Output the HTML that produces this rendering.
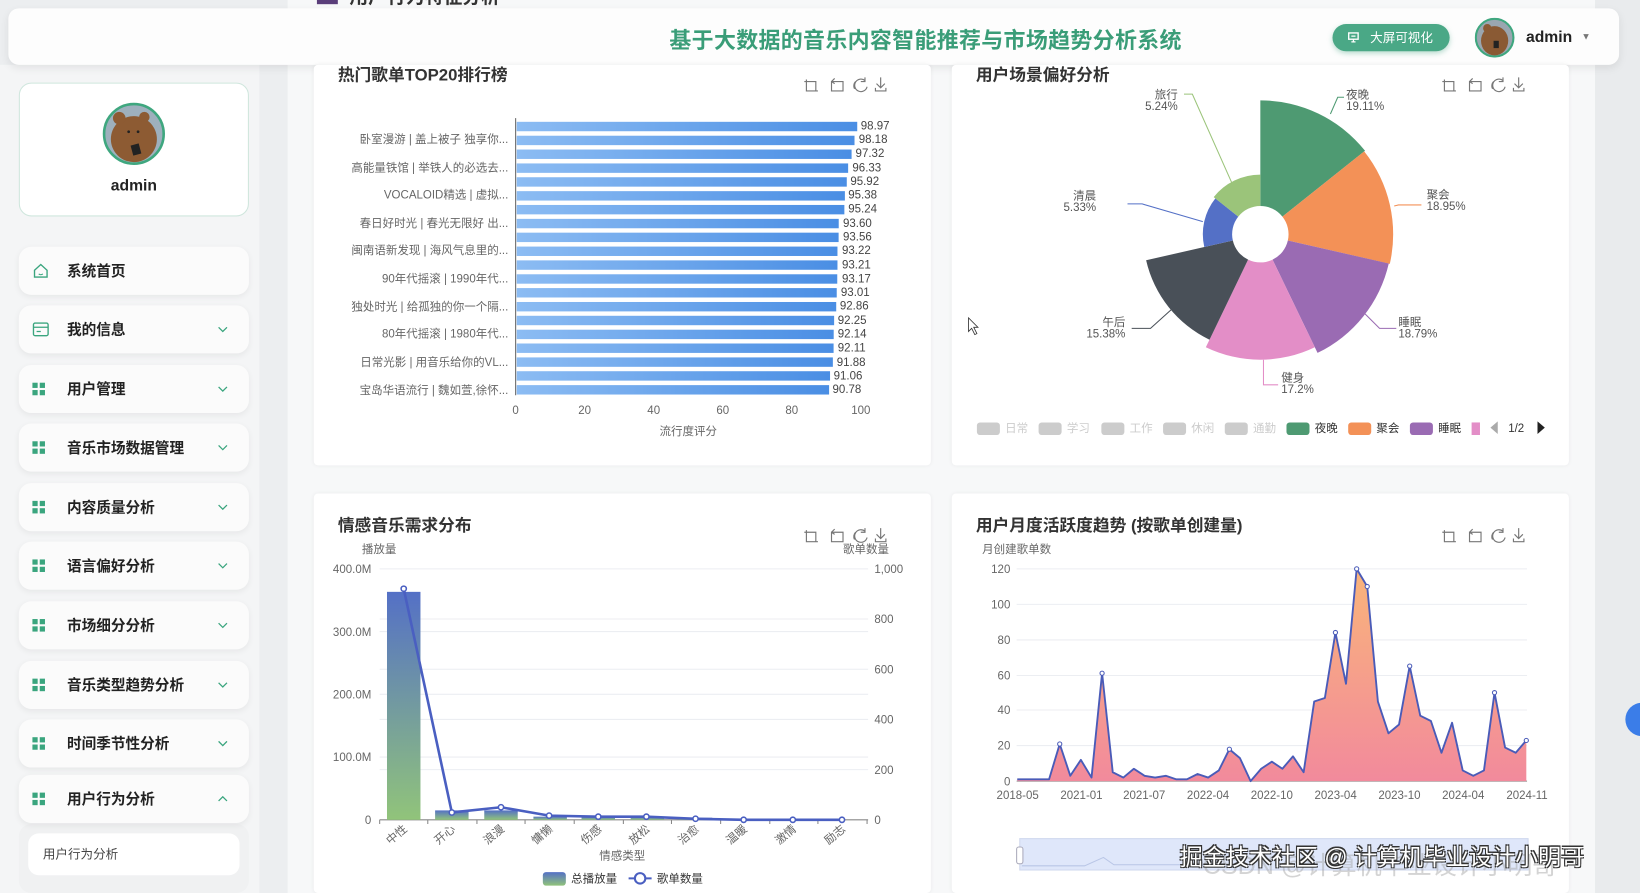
<!DOCTYPE html>
<html><head><meta charset="utf-8">
<style>
*{margin:0;padding:0;box-sizing:border-box}
html,body{width:1640px;height:893px;overflow:hidden;background:#eef0f2;font-family:"Liberation Sans","Noto Sans CJK SC",sans-serif}
#w{position:absolute;left:0;top:0;width:1568px;height:854px;transform:scale(1.04592,1.04567);transform-origin:0 0;background:#eceef0}
.abs{position:absolute}
.side{left:0;top:62px;width:248px;height:792px;background:#f4f5f6}
.pcard{left:18px;top:79px;width:220px;height:128px;background:#fff;border:1px solid #cfe6dd;border-radius:12px;text-align:center}
.menu{left:18px;width:220px;height:46px;background:#fbfbfb;border-radius:12px;box-shadow:0 2px 6px rgba(0,0,0,.06);font-size:14px;font-weight:bold;color:#222;line-height:46px;padding-left:46px}
.menu .ic{position:absolute;left:13px;top:17px;width:13px;height:13px}
.menu .ic i{position:absolute;width:5px;height:5px;background:#3aa57e}
.menu .ar{position:absolute;right:20px;top:19px;width:10px;height:8px}
.main{left:275px;top:0;width:1250px;height:854px;background:#f7f8f9}
.card{background:#fff;border-radius:4px;box-shadow:0 0 4px rgba(0,0,0,.06)}
svg text{font-family:"Liberation Sans","Noto Sans CJK SC",sans-serif}
</style></head><body><div id="w">

<div class="abs main"></div>
<div class="abs" style="left:303px;top:-8px;width:20px;height:12px;background:#5a3e7a"></div>
<div class="abs" style="left:334px;top:-17px;font-size:18px;font-weight:bold;color:#333">用户行为特征分析</div>
<div class="abs" style="left:1525px;top:0;width:43px;height:854px;background:#e9ebed"></div>

<div class="abs side"></div>
<div class="abs" style="left:8px;top:8px;width:1540px;height:54px;background:#fdfdfd;border-radius:10px;box-shadow:0 3px 8px rgba(0,0,0,.08)"></div>
<div class="abs" style="left:640px;top:23px;font-size:21px;font-weight:bold;color:#3a9d78;letter-spacing:0.3px">基于大数据的音乐内容智能推荐与市场趋势分析系统</div>
<div class="abs" style="left:1274px;top:23px;width:112px;height:26px;background:#4aa886;border-radius:13px;color:#fff;font-size:12px;line-height:26px;padding-left:36px;box-shadow:0 2px 5px rgba(74,168,134,.4)">大屏可视化</div>
<svg class="abs" style="left:1288px;top:30px" width="12" height="12" viewBox="0 0 12 12"><rect x="1.5" y="1.5" width="9" height="6" fill="none" stroke="#fff" stroke-width="1.3"/><path d="M4 10h4M6 7.5v2.5M4 4.5h4" stroke="#fff" stroke-width="1.2"/></svg>
<svg class="abs" style="left:1410px;top:17px" width="38" height="38" viewBox="0 0 38 38"><circle cx="19" cy="19" r="18" fill="#9aa6b0" stroke="#3fa77f" stroke-width="2"/><ellipse cx="19" cy="22" rx="13" ry="14" fill="#8a5a34"/><circle cx="12" cy="10" r="4" fill="#8a5a34"/><rect x="18" y="22" width="5" height="7" fill="#222"/></svg>
<div class="abs" style="left:1459px;top:27px;font-size:15px;font-weight:bold;color:#222">admin</div>
<div class="abs" style="left:1512px;top:30px;font-size:9px;color:#777">▼</div>

<div class="abs pcard">
<svg style="margin-top:18px" width="60" height="60" viewBox="0 0 60 60"><circle cx="30" cy="30" r="28.5" fill="#9eb0bd" stroke="#3fa77f" stroke-width="2.5"/><ellipse cx="30" cy="35" rx="22" ry="22" fill="#8d5b33"/><circle cx="16" cy="15" r="6" fill="#8d5b33"/><circle cx="40" cy="14" r="5" fill="#8d5b33"/><circle cx="25" cy="28" r="1.3" fill="#222"/><circle cx="34" cy="28" r="1.3" fill="#222"/><rect x="28" y="40" width="8" height="10" fill="#222" transform="rotate(-15 32 45)"/></svg>
<div style="font-size:15px;font-weight:bold;color:#222;margin-top:6px">admin</div>
</div>

<svg width="0" height="0" style="position:absolute"><defs><path id="chd" d="M1 2l4 4 4-4" fill="none" stroke="#3aa57e" stroke-width="1.2"/><path id="chu" d="M1 6l4-4 4 4" fill="none" stroke="#3aa57e" stroke-width="1.2"/></defs></svg>

<div class="abs menu" style="top:236px"><svg class="ic" style="top:15px;width:16px;height:16px" viewBox="0 0 16 16"><path d="M2 7.5L8 2l6 5.5V14H2z" fill="none" stroke="#3aa57e" stroke-width="1.3"/><path d="M6 11q2 1.5 4 0" stroke="#3aa57e" fill="none"/></svg>系统首页</div>
<div class="abs menu" style="top:292px"><svg class="ic" style="top:16px;width:16px;height:14px" viewBox="0 0 16 14"><rect x="1" y="1" width="14" height="12" rx="1.5" fill="none" stroke="#3aa57e" stroke-width="1.3"/><path d="M1 5h14M4 9h4" stroke="#3aa57e" stroke-width="1.2"/></svg>我的信息<svg class="ar" viewBox="0 0 10 8"><use href="#chd"/></svg></div>
<div class="abs menu" style="top:349px"><span class="ic"><i style="left:0;top:0"></i><i style="left:7px;top:0"></i><i style="left:0;top:7px"></i><i style="left:7px;top:7px"></i></span>用户管理<svg class="ar" viewBox="0 0 10 8"><use href="#chd"/></svg></div>
<div class="abs menu" style="top:405px"><span class="ic"><i style="left:0;top:0"></i><i style="left:7px;top:0"></i><i style="left:0;top:7px"></i><i style="left:7px;top:7px"></i></span>音乐市场数据管理<svg class="ar" viewBox="0 0 10 8"><use href="#chd"/></svg></div>
<div class="abs menu" style="top:462px"><span class="ic"><i style="left:0;top:0"></i><i style="left:7px;top:0"></i><i style="left:0;top:7px"></i><i style="left:7px;top:7px"></i></span>内容质量分析<svg class="ar" viewBox="0 0 10 8"><use href="#chd"/></svg></div>
<div class="abs menu" style="top:518px"><span class="ic"><i style="left:0;top:0"></i><i style="left:7px;top:0"></i><i style="left:0;top:7px"></i><i style="left:7px;top:7px"></i></span>语言偏好分析<svg class="ar" viewBox="0 0 10 8"><use href="#chd"/></svg></div>
<div class="abs menu" style="top:575px"><span class="ic"><i style="left:0;top:0"></i><i style="left:7px;top:0"></i><i style="left:0;top:7px"></i><i style="left:7px;top:7px"></i></span>市场细分分析<svg class="ar" viewBox="0 0 10 8"><use href="#chd"/></svg></div>
<div class="abs menu" style="top:632px"><span class="ic"><i style="left:0;top:0"></i><i style="left:7px;top:0"></i><i style="left:0;top:7px"></i><i style="left:7px;top:7px"></i></span>音乐类型趋势分析<svg class="ar" viewBox="0 0 10 8"><use href="#chd"/></svg></div>
<div class="abs menu" style="top:688px"><span class="ic"><i style="left:0;top:0"></i><i style="left:7px;top:0"></i><i style="left:0;top:7px"></i><i style="left:7px;top:7px"></i></span>时间季节性分析<svg class="ar" viewBox="0 0 10 8"><use href="#chd"/></svg></div>
<div class="abs" style="left:18px;top:788px;width:220px;height:66px;background:#f0f1f2;border-radius:12px"></div>
<div class="abs menu" style="top:741px"><span class="ic"><i style="left:0;top:0"></i><i style="left:7px;top:0"></i><i style="left:0;top:7px"></i><i style="left:7px;top:7px"></i></span>用户行为分析<svg class="ar" viewBox="0 0 10 8"><use href="#chu"/></svg></div>
<div class="abs" style="left:27px;top:797px;width:202px;height:40px;background:#fff;border-radius:10px;font-size:12px;color:#444;line-height:40px;padding-left:14px">用户行为分析</div>

<div class="abs card" style="left:300px;top:62px;width:590px;height:383px"></div>
<div class="abs card" style="left:910px;top:62px;width:590px;height:383px"></div>
<div class="abs card" style="left:300px;top:472px;width:590px;height:382px"></div>
<div class="abs card" style="left:910px;top:472px;width:590px;height:382px"></div>

<svg class="abs" style="left:0;top:0" width="1568" height="854" viewBox="0 0 1568 854">
<defs>
<linearGradient id="gb" x1="0" x2="1"><stop offset="0" stop-color="#8cbcf3"/><stop offset="1" stop-color="#4a8ee4"/></linearGradient>
<linearGradient id="gv" x1="0" y1="0" x2="0" y2="1"><stop offset="0" stop-color="#5470c6"/><stop offset="1" stop-color="#91c47a"/></linearGradient>
<linearGradient id="ga" x1="0" y1="544" x2="0" y2="747" gradientUnits="userSpaceOnUse"><stop offset="0" stop-color="#f9b47a"/><stop offset="1" stop-color="#f28a9c"/></linearGradient>
<g id="tool" fill="none" stroke="#777" stroke-width="1.1"><path d="M2 3v11h11M0 5h11v9"/><path d="M26 5h11v9H26zM26 5l3-3M26 5l3 2"/><path d="M58 4a6 6 0 1 0 2 6M58 1v4h-4M48 12a6 6 0 0 1 1-7"/><path d="M73 1v10M69 7l4 4 4-4M68 11v3h10v-3"/></g>
</defs>
<g font-size="16" font-weight="bold" fill="#333">
<text x="323" y="77">热门歌单TOP20排行榜</text>
<text x="933" y="77">用户场景偏好分析</text>
<text x="323" y="508">情感音乐需求分布</text>
<text x="933" y="508">用户月度活跃度趋势 (按歌单创建量)</text>
</g>
<use href="#tool" x="769" y="73"/><use href="#tool" x="1379" y="73"/><use href="#tool" x="769" y="504"/><use href="#tool" x="1379" y="504"/>

<g fill="url(#gb)">
<rect x="494" y="116.5" width="325.6" height="9"/><rect x="494" y="129.8" width="323" height="9"/><rect x="494" y="143" width="320.2" height="9"/><rect x="494" y="156.3" width="316.9" height="9"/><rect x="494" y="169.5" width="315.6" height="9"/><rect x="494" y="182.8" width="313.8" height="9"/><rect x="494" y="196" width="313.3" height="9"/><rect x="494" y="209.3" width="307.9" height="9"/><rect x="494" y="222.5" width="307.8" height="9"/><rect x="494" y="235.8" width="306.7" height="9"/><rect x="494" y="249" width="306.7" height="9"/><rect x="494" y="262.3" width="306.5" height="9"/><rect x="494" y="275.5" width="306" height="9"/><rect x="494" y="288.8" width="305.5" height="9"/><rect x="494" y="302" width="303.5" height="9"/><rect x="494" y="315.3" width="303.1" height="9"/><rect x="494" y="328.5" width="303" height="9"/><rect x="494" y="341.8" width="302.3" height="9"/><rect x="494" y="355" width="299.6" height="9"/><rect x="494" y="368.3" width="298.7" height="9"/>
</g>
<g font-size="11" fill="#444">
<text x="823" y="124">98.97</text><text x="821" y="137">98.18</text><text x="818" y="150">97.32</text><text x="815" y="164">96.33</text><text x="813" y="177">95.92</text><text x="811" y="190">95.38</text><text x="811" y="203">95.24</text><text x="806" y="217">93.60</text><text x="806" y="230">93.56</text><text x="805" y="243">93.22</text><text x="805" y="257">93.21</text><text x="805" y="270">93.17</text><text x="804" y="283">93.01</text><text x="803" y="296">92.86</text><text x="801" y="310">92.25</text><text x="801" y="323">92.14</text><text x="801" y="336">92.11</text><text x="800" y="350">91.88</text><text x="797" y="363">91.06</text><text x="796" y="376">90.78</text>
</g>
<g font-size="11" fill="#666" text-anchor="end">
<text x="486" y="137">卧室漫游 | 盖上被子 独享你...</text><text x="486" y="164">高能量铁馆 | 举铁人的必选去...</text><text x="486" y="190">VOCALOID精选 | 虚拟...</text><text x="486" y="217">春日好时光 | 春光无限好 出...</text><text x="486" y="243">闽南语新发现 | 海风气息里的...</text><text x="486" y="270">90年代摇滚 | 1990年代...</text><text x="486" y="297">独处时光 | 给孤独的你一个隔...</text><text x="486" y="323">80年代摇滚 | 1980年代...</text><text x="486" y="350">日常光影 | 用音乐给你的VL...</text><text x="486" y="377">宝岛华语流行 | 魏如萱,徐怀...</text>
</g>
<path d="M493 113v265" stroke="#666"/>
<g font-size="11" fill="#666" text-anchor="middle"><text x="493" y="396">0</text><text x="559" y="396">20</text><text x="625" y="396">40</text><text x="691" y="396">60</text><text x="757" y="396">80</text><text x="823" y="396">100</text><text x="658" y="416">流行度评分</text></g>

<path d="M1205 96A128 128 0 0 1 1305.1 144.2L1226.1 207.2A27 27 0 0 0 1205 197Z" fill="#4e9a72"/>
<path d="M1304.3 144.8A127 127 0 0 1 1328.8 252.3L1231.3 230A27 27 0 0 0 1226.1 207.2Z" fill="#f39157"/>
<path d="M1327.8 252A126 126 0 0 1 1259.7 337.5L1216.7 248.3A27 27 0 0 0 1231.3 230Z" fill="#9a6bb3"/>
<path d="M1257.1 332.1A120 120 0 0 1 1152.9 332.1L1193.3 248.3A27 27 0 0 0 1216.7 248.3Z" fill="#e38ec7"/>
<path d="M1156.4 324.9A112 112 0 0 1 1095.8 248.9L1178.7 230A27 27 0 0 0 1193.3 248.3Z" fill="#495058"/>
<path d="M1151.4 236.2A55 55 0 0 1 1162 189.7L1183.9 207.2A27 27 0 0 0 1178.7 230Z" fill="#5470c6"/>
<path d="M1160.4 188.5A57 57 0 0 1 1205 167L1205 197A27 27 0 0 0 1183.9 207.2Z" fill="#9bc47a"/>
<g fill="none" stroke-width="1">
<path d="M1272 109l7-16h6" stroke="#4e9a72"/><path d="M1333 197l4-1h22" stroke="#f39157"/><path d="M1305 300l14 14h16" stroke="#9a6bb3"/><path d="M1208 344v24h14" stroke="#e38ec7"/><path d="M1120 296l-20 18h-18" stroke="#495058"/><path d="M1150 212l-58-17h-14" stroke="#5470c6"/><path d="M1180 180l-40-90h-8" stroke="#9bc47a"/>
</g>
<g font-size="11" fill="#555">
<text x="1287" y="94">夜晚</text><text x="1287" y="105">19.11%</text>
<text x="1364" y="190">聚会</text><text x="1364" y="201">18.95%</text>
<text x="1337" y="312">睡眠</text><text x="1337" y="323">18.79%</text>
<text x="1225" y="365">健身</text><text x="1225" y="376">17.2%</text>
<text x="1076" y="312" text-anchor="end">午后</text><text x="1076" y="323" text-anchor="end">15.38%</text>
<text x="1048" y="191" text-anchor="end">清晨</text><text x="1048" y="202" text-anchor="end">5.33%</text>
<text x="1126" y="94" text-anchor="end">旅行</text><text x="1126" y="105" text-anchor="end">5.24%</text>
</g>
<path d="M926 304v13l3-3 3 6 2-1-3-6h4z" fill="#fff" stroke="#333" stroke-width=".8"/>
<g font-size="11">
<rect x="934" y="404" width="22" height="12" rx="3" fill="#ccc"/><text x="961" y="413" fill="#ccc">日常</text>
<rect x="993" y="404" width="22" height="12" rx="3" fill="#ccc"/><text x="1020" y="413" fill="#ccc">学习</text>
<rect x="1053" y="404" width="22" height="12" rx="3" fill="#ccc"/><text x="1080" y="413" fill="#ccc">工作</text>
<rect x="1112" y="404" width="22" height="12" rx="3" fill="#ccc"/><text x="1139" y="413" fill="#ccc">休闲</text>
<rect x="1171" y="404" width="22" height="12" rx="3" fill="#ccc"/><text x="1198" y="413" fill="#ccc">通勤</text>
<rect x="1230" y="404" width="22" height="12" rx="3" fill="#4e9a72"/><text x="1257" y="413" fill="#333">夜晚</text>
<rect x="1289" y="404" width="22" height="12" rx="3" fill="#f39157"/><text x="1316" y="413" fill="#333">聚会</text>
<rect x="1348" y="404" width="22" height="12" rx="3" fill="#9a6bb3"/><text x="1375" y="413" fill="#333">睡眠</text>
<rect x="1407" y="404" width="8" height="12" fill="#e38ec7"/>
<path d="M1432 403l-7 6 7 6z" fill="#aaa"/><text x="1442" y="413" fill="#333">1/2</text><path d="M1470 403l7 6-7 6z" fill="#222"/>
</g>

<g stroke="#eceef2" stroke-width="1"><path d="M363 544h467M363 604h467M363 664h467M363 724h467M363 592h467M363 640h467M363 688h467M363 736h467"/></g>
<path d="M363 784h467" stroke="#888"/>
<g stroke="#888"><path d="M363 784v4M409 784v4M456 784v4M502 784v4M549 784v4M596 784v4M642 784v4M689 784v4M736 784v4M782 784v4M829 784v4"/></g>
<g fill="url(#gv)"><rect x="370" y="566" width="32" height="218"/><rect x="416" y="775" width="32" height="9"/><rect x="463" y="775" width="32" height="9"/><rect x="510" y="781" width="32" height="3"/><rect x="556" y="781" width="32" height="3"/><rect x="603" y="781" width="32" height="3"/><rect x="649" y="782" width="32" height="2"/></g>
<polyline points="386,563 432,777 479,772 525,780 572,781 618,781 665,783 711,784 758,784 805,784" fill="none" stroke="#4a5fc1" stroke-width="2.5"/>
<g fill="#fff" stroke="#4a5fc1" stroke-width="1.5"><circle cx="386" cy="563" r="2.5"/><circle cx="432" cy="777" r="2.5"/><circle cx="479" cy="772" r="2.5"/><circle cx="525" cy="780" r="2.5"/><circle cx="572" cy="781" r="2.5"/><circle cx="618" cy="781" r="2.5"/><circle cx="665" cy="783" r="2.5"/><circle cx="711" cy="784" r="2.5"/><circle cx="758" cy="784" r="2.5"/><circle cx="805" cy="784" r="2.5"/></g>
<g font-size="11" fill="#666">
<text x="346" y="529">播放量</text><text x="806" y="529">歌单数量</text>
<text x="355" y="548" text-anchor="end">400.0M</text><text x="355" y="608" text-anchor="end">300.0M</text><text x="355" y="668" text-anchor="end">200.0M</text><text x="355" y="728" text-anchor="end">100.0M</text><text x="355" y="788" text-anchor="end">0</text>
<text x="836" y="548">1,000</text><text x="836" y="596">800</text><text x="836" y="644">600</text><text x="836" y="692">400</text><text x="836" y="740">200</text><text x="836" y="788">0</text>
<g text-anchor="end"><text transform="translate(390 794) rotate(-40)">中性</text><text transform="translate(436 794) rotate(-40)">开心</text><text transform="translate(483 794) rotate(-40)">浪漫</text><text transform="translate(529 794) rotate(-40)">慵懒</text><text transform="translate(576 794) rotate(-40)">伤感</text><text transform="translate(622 794) rotate(-40)">放松</text><text transform="translate(669 794) rotate(-40)">治愈</text><text transform="translate(715 794) rotate(-40)">温暖</text><text transform="translate(762 794) rotate(-40)">激情</text><text transform="translate(809 794) rotate(-40)">励志</text></g>
<text x="595" y="822" text-anchor="middle">情感类型</text>
<rect x="519" y="834" width="22" height="13" rx="3" fill="url(#gv)"/><text x="546" y="844" fill="#333">总播放量</text>
<path d="M601 840h22" stroke="#4a5fc1" stroke-width="2"/><circle cx="612" cy="840" r="5" fill="#fff" stroke="#4a5fc1" stroke-width="2"/><text x="628" y="844" fill="#333">歌单数量</text>
</g>

<g stroke="#eceef2"><path d="M972 544h488M972 578h488M972 612h488M972 646h488M972 679h488M972 713h488"/></g>
<path d="M972 747h488" stroke="#888"/>
<g font-size="11" fill="#666" text-anchor="end"><text x="966" y="548">120</text><text x="966" y="582">100</text><text x="966" y="616">80</text><text x="966" y="650">60</text><text x="966" y="683">40</text><text x="966" y="717">20</text><text x="966" y="751">0</text></g>
<text x="939" y="529" font-size="11" fill="#666">月创建歌单数</text>
<g font-size="11" fill="#666" text-anchor="middle"><text x="973" y="764">2018-05</text><text x="1034" y="764">2021-01</text><text x="1094" y="764">2021-07</text><text x="1155" y="764">2022-04</text><text x="1216" y="764">2022-10</text><text x="1277" y="764">2023-04</text><text x="1338" y="764">2023-10</text><text x="1399" y="764">2024-04</text><text x="1460" y="764">2024-11</text></g>
<polygon fill="url(#ga)" points="972.6,747 972.6,745.3 982.7,745.3 992.9,745.3 1003,745.3 1013.2,711.5 1023.3,741.9 1033.4,726.7 1043.6,743.6 1053.7,643.8 1063.9,738.5 1074,743.6 1084.1,735.2 1094.3,741.9 1104.4,743.6 1114.6,741.9 1124.7,745.3 1134.8,745.3 1145,740.2 1155.1,743.6 1165.3,736.8 1175.4,716.5 1185.5,725 1195.7,747 1205.8,735.2 1216,728.4 1226.1,735.2 1236.2,723.3 1246.4,738.5 1256.5,670.9 1266.7,667.5 1276.8,604.9 1286.9,653.9 1297.1,544 1307.2,560.9 1317.4,670.9 1327.5,701.3 1337.6,692.9 1347.8,637 1357.9,684.4 1368.1,689.5 1378.2,719.9 1388.3,691.2 1398.5,736.8 1408.6,741.9 1418.8,736.8 1428.9,662.4 1439,714.9 1449.2,719.9 1459.3,708.1 1459.3,747"/>
<polyline fill="none" stroke="#4a5bb8" stroke-width="1.8" stroke-linejoin="round" points="972.6,745.3 982.7,745.3 992.9,745.3 1003,745.3 1013.2,711.5 1023.3,741.9 1033.4,726.7 1043.6,743.6 1053.7,643.8 1063.9,738.5 1074,743.6 1084.1,735.2 1094.3,741.9 1104.4,743.6 1114.6,741.9 1124.7,745.3 1134.8,745.3 1145,740.2 1155.1,743.6 1165.3,736.8 1175.4,716.5 1185.5,725 1195.7,747 1205.8,735.2 1216,728.4 1226.1,735.2 1236.2,723.3 1246.4,738.5 1256.5,670.9 1266.7,667.5 1276.8,604.9 1286.9,653.9 1297.1,544 1307.2,560.9 1317.4,670.9 1327.5,701.3 1337.6,692.9 1347.8,637 1357.9,684.4 1368.1,689.5 1378.2,719.9 1388.3,691.2 1398.5,736.8 1408.6,741.9 1418.8,736.8 1428.9,662.4 1439,714.9 1449.2,719.9 1459.3,708.1"/>
<g fill="#fff" stroke="#4a5bb8" stroke-width="1"><circle cx="1013.2" cy="711.5" r="2"/><circle cx="1053.7" cy="643.8" r="2"/><circle cx="1276.8" cy="604.9" r="2"/><circle cx="1297.1" cy="544" r="2"/><circle cx="1307.2" cy="560.9" r="2"/><circle cx="1347.8" cy="637" r="2"/><circle cx="1428.9" cy="662.4" r="2"/><circle cx="1459.3" cy="708.1" r="2"/><circle cx="1175.4" cy="716.5" r="2"/></g>
<rect x="975" y="802" width="486" height="30" fill="#dfe7fa" stroke="#d0d8ee"/>
<path d="M977 828h60l18-8 10 7h90" fill="none" stroke="#b9c6e6"/>
<rect x="972" y="810" width="6" height="16" rx="2" fill="#fff" stroke="#aab"/>
<circle cx="1570" cy="688" r="16" fill="#3b7de8"/>
</svg>

<div class="abs" style="left:1150px;top:808px;font-size:24px;color:rgba(160,160,160,.45)">CSDN @计算机毕业设计小明哥</div>
<div class="abs" style="left:1128px;top:802px;font-size:22px;color:#fff;text-shadow:-1px -1px 0 #333,1px -1px 0 #333,-1px 1px 0 #333,1px 1px 0 #333">掘金技术社区 @ 计算机毕业设计小明哥</div>
</div></body></html>
